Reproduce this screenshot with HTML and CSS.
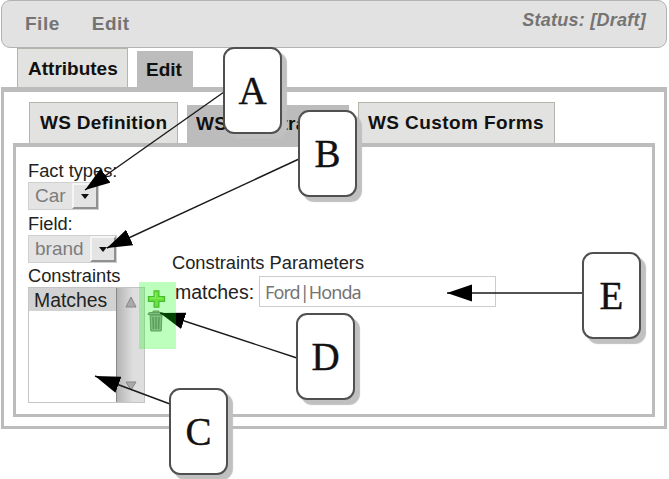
FILE: index.html
```
<!DOCTYPE html>
<html>
  <head>
    <meta charset="UTF-8">
    <title>Constraints editor</title>
    <link rel="stylesheet" href="styles.css">
  </head>

  <body>
    <div id="menu">
      <div class="menu__item">File</div>
      <div class="menu__item">Edit</div>
      <div id="status">Status: [Draft]</div>
    </div>

    <div class="tabs">
      <div class="tab">Attributes</div>
      <div class="tab active">Edit</div>
    </div>
    <div id="panel">
      <div class="tabs inner">
        <div class="tab">WS Definition</div>
        <div class="tab active">WS Constraints</div>
        <div class="tab">WS Custom Forms</div>
      </div>
      <div id="content">
        <div id="left">
          <div class="label">Fact types:</div>
          <div class="select car"><span>Car</span><div class="arrow"></div></div>
          <div class="label">Field:</div>
          <div class="select brand"><span>brand</span><div class="arrow"></div></div>
          <div class="label constraints">Constraints</div>
          <div id="list">
            <div class="options"><div class="option">Matches</div></div>
            <div class="scroll">
              <svg width="12" height="12" viewBox="0 0 12 12"><path d="M1 11L6 1L11 11Z" fill="#aaa" stroke="#858585"/></svg>
              <svg width="12" height="10" viewBox="0 0 12 10"><path d="M1 1H11L6 9Z" fill="#aaa" stroke="#858585"/></svg>
            </div>
          </div>
        </div>
        <div id="actions">
          <svg width="19" height="20" viewBox="0 0 20 20">
            <path d="M7.5 1.500H12.500V7.500H18.500V12.500H12.500V18.500H7.500V12.500H1.500V7.500H7.500Z" fill="#8fd65a" stroke="#5fa83a" stroke-width="1.3"/>
            <path d="M9 3.500V9H3.500M11 9H16" fill="none" stroke="#b9ee72" stroke-width="1.4"/>
          </svg>
          <svg width="18" height="23" viewBox="0 0 18 23">
            <path d="M3 6H15L14.200 22H3.800Z" fill="#aaa" stroke="#808080"/>
            <path d="M1 5.500Q1 3.500 3 3.500H15Q17 3.500 17 5.500ZM6 3V2H12V3" fill="#aaa" stroke="#808080"/>
            <path d="M6 8L6.500 20M9 8V20M12 8L11.500 20" stroke="#777" stroke-width="1.4"/>
          </svg>
        </div>
        <div id="params">
          <div class="label">Constraints Parameters</div>
          <div class="row">
            <div class="name">matches:</div>
            <div class="field">Ford|Honda</div>
          </div>
        </div>
      </div>
    </div>

    <!-- lines from each callout to its control -->
    <svg id="arrows" width="669" height="479" viewBox="0 0 669 479">
      <defs>
        <marker id="head" markerUnits="userSpaceOnUse" markerWidth="26" markerHeight="18" refX="25" refY="9" orient="auto">
          <path d="M0 0.5L25 9L0 17.5Z"/>
        </marker>
      </defs>
      <g stroke="#1a1a1a" stroke-width="1.4">
        <line x1="224" y1="92" x2="85" y2="190" marker-end="url(#head)"/>
        <line x1="299" y1="159" x2="107" y2="248" marker-end="url(#head)"/>
        <line x1="170" y1="404" x2="95" y2="376" marker-end="url(#head)"/>
        <line x1="297" y1="358" x2="160" y2="313" marker-end="url(#head)"/>
        <line x1="583" y1="293" x2="447" y2="293" marker-end="url(#head)"/>
      </g>
    </svg>
    <div id="highlight"></div>
    <div class="callout a">A</div>
    <div class="callout b">B</div>
    <div class="callout c">C</div>
    <div class="callout d">D</div>
    <div class="callout e">E</div>
  </body>
</html>
```
FILE: styles.css
```
* {
  box-sizing: border-box;
}
html, body {
  margin: 0;
  padding: 0;
  width: 669px;
  height: 479px;
  overflow: hidden;
  background: #fff;
  font-family: 'Liberation Sans', Arial, sans-serif;
  color: #222;
}
body {
  position: relative;
  padding: 0 2px 0 1px;
}

#menu {
  display: flex;
  height: 48px;
  padding: 0 20px 0 23px;
  gap: 32px;
  border: 1px solid #b3b3b3;
  border-radius: 9px;
  background: #e2e2e2;
  color: #747474;
  font-weight: bold;
}
.menu__item {
  font-size: 19px;
  line-height: 45px;
  letter-spacing: 0.5px;
}
#status {
  margin-left: auto;
  font-size: 18px;
  line-height: 39px;
  font-style: italic;
  letter-spacing: 0.25px;
}

.tabs {
  display: flex;
  align-items: flex-end;
  height: 39px;
  padding-left: 16px;
  gap: 9px;
}
.tab {
  height: 39px;
  width: 111px;
  padding-left: 10px;
  border: 1px solid #b5b5ad;
  border-bottom: none;
  background: #e2e2e1;
  color: #111;
  font-size: 19px;
  font-weight: bold;
  line-height: 39px;
  white-space: nowrap;
}
.tab.active {
  width: 56px;
  height: 36px;
  padding-left: 9px;
  border: none;
  background: #bcbcbc;
  line-height: 37px;
}

#panel {
  height: 342px;
  padding: 10px 9px 0;
  border: 3px solid #bcbcbc;
  border-top-width: 5px;
}
.tabs.inner {
  height: 41px;
}
.inner .tab {
  width: 149px;
  height: 41px;
  line-height: 40px;
  letter-spacing: 0.3px;
}
.inner .tab.active {
  width: 162px;
  height: 38px;
  line-height: 37px;
}
.inner .tab:last-child {
  width: 197px;
  padding-left: 9px;
  letter-spacing: 0.4px;
}

#content {
  display: flex;
  height: 274px;
  padding: 13px 0 0 12px;
  border: 3px solid #bcbcbc;
  border-top-width: 4px;
}
#left {
  width: 117px;
}
.label {
  height: 22px;
  font-size: 18.3px;
  line-height: 21px;
  white-space: nowrap;
}
.label.constraints {
  height: 24px;
  line-height: 25px;
}
.select {
  display: flex;
  justify-content: space-between;
  height: 28px;
  margin-bottom: 3px;
  padding-left: 6px;
  border: 1px solid #d0d0d0;
  background: #e4e4e4;
  color: #7c7c7c;
  font-size: 19px;
  line-height: 26px;
}
.select.car {
  width: 71px;
}
.select.brand {
  width: 89px;
  margin-bottom: 0;
}
.arrow {
  display: flex;
  width: 26px;
  justify-content: center;
  align-items: center;
  border: 2px solid #f5f5f5;
  border-right-color: #909090;
  border-bottom-color: #909090;
}
.arrow::after {
  content: '';
  border: 4.5px solid transparent;
  border-top: 5px solid #111;
  border-bottom: none;
}

#list {
  display: flex;
  height: 116px;
  border: 1px solid #c4c4c4;
}
.options {
  flex: 1;
}
.option {
  height: 23px;
  padding-left: 5px;
  background: #d2d2d2;
  font-size: 19.4px;
  line-height: 24px;
}
.scroll {
  display: flex;
  flex-direction: column;
  align-items: center;
  justify-content: space-between;
  width: 28px;
  padding: 8px 0 11px;
  border-left: 1px solid #888;
  background: linear-gradient(to right, #b5b5b5, #dedede 60%);
}

#actions {
  display: flex;
  flex-direction: column;
  align-items: center;
  width: 22px;
  padding-top: 129px;
}
#actions svg {
  flex: none;
}
#params {
  padding: 92px 0 0 5px;
}
#params .row {
  display: flex;
  height: 31px;
  margin-top: 2px;
}
.name {
  width: 87px;
  padding-left: 3px;
  font-size: 19.5px;
  line-height: 32px;
}
.field {
  width: 237px;
  padding-left: 5px;
  border: 1px solid #ccc;
  color: #747474;
  font-family: 'Noto Sans', sans-serif;
  font-size: 18px;
  line-height: 30px;
  letter-spacing: -0.9px;
}

#arrows {
  position: absolute;
  top: 0;
  left: 0;
}
#highlight {
  position: absolute;
  left: 139px;
  top: 282px;
  width: 37px;
  height: 67px;
  background: rgba(0, 255, 0, 0.26);
}
.callout {
  position: absolute;
  width: 59px;
  height: 87px;
  border: 2px solid #505050;
  border-radius: 11px;
  background: #fff;
  box-shadow: 5px 5px 1px #c0c0c0;
  color: #111;
  font-family: 'Liberation Serif', serif;
  font-size: 39px;
  line-height: 83px;
  text-align: center;
  -webkit-text-stroke: 0.4px #111;
}
.callout.a {
  left: 223px;
  top: 47px;
}
.callout.b {
  left: 298px;
  top: 110px;
}
.callout.c {
  left: 169px;
  top: 388px;
}
.callout.d {
  left: 296px;
  top: 313px;
}
.callout.e {
  left: 582px;
  top: 252px;
}
```
